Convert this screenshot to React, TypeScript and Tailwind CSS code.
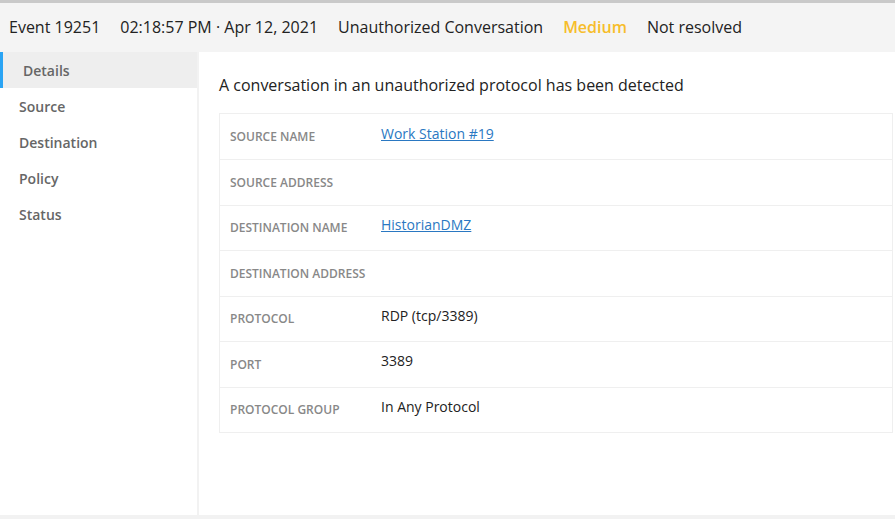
import React from 'react';

type Row = { label: string; value?: string; link?: boolean };

const ROWS: Row[] = [
  { label: 'Source Name', value: 'Work Station #19', link: true },
  { label: 'Source Address' },
  { label: 'Destination Name', value: 'HistorianDMZ', link: true },
  { label: 'Destination Address' },
  { label: 'Protocol', value: 'RDP (tcp/3389)' },
  { label: 'Port', value: '3389' },
  { label: 'Protocol Group', value: 'In Any Protocol' },
];

const NAV = ['Details', 'Source', 'Destination', 'Policy', 'Status'];

export default function App() {
  return (
    <div className="h-[519px] w-[895px] overflow-hidden bg-[#f2f2f2] flex flex-col font-['Open_Sans',sans-serif]">
      <div className="h-[3px] bg-[#c9c9c9]" />
      {/* header */}
      <header className="h-[49px] bg-[#f4f4f4] flex items-center gap-5 pl-[9px] pb-[2px] text-[16px] text-[#222]">
        <span>Event 19251</span>
        <span>02:18:57 PM · Apr 12, 2021</span>
        <span>Unauthorized Conversation</span>
        <span className="text-[#f7bd2a] font-semibold">Medium</span>
        <span>Not resolved</span>
      </header>

      <div className="flex flex-1 min-h-0 gap-[2px] pb-[4px]">
        <nav className="w-[197px] bg-white flex flex-col">
          {NAV.map((n, i) => (
            <div
              key={n}
              className={
                i === 0
                  ? 'h-[36px] flex items-center pl-[20px] border-l-[3px] border-[#2aa4f4] bg-[#eeeeee] text-[14px] font-semibold text-[#666]'
                  : 'h-[36px] flex items-center pl-[19px] text-[14px] font-semibold text-[#666]'
              }
            >
              {n}
            </div>
          ))}
        </nav>

        <main className="flex-1 bg-white pl-[20px] pr-[2px] pt-[22px]">
          <h1 className="text-[16px] text-[#222] leading-[22px]">
            A conversation in an unauthorized protocol has been detected
          </h1>
          <div className="mt-[17px] border border-[#efefef]">
            {ROWS.map((r, i) => (
              <div
                key={r.label}
                className={
                  i === 0
                    ? 'h-[45px] flex items-center'
                    : 'h-[45.5px] flex items-center border-t border-[#efefef]'
                }
              >
                <div className="w-[161px] pl-[10px] pt-[1px] text-[12px] font-semibold uppercase text-[#888]">
                  {r.label}
                </div>
                {r.value && (
                  <div
                    className={
                      r.link
                        ? 'text-[14px] text-[#2a78c2] underline -mt-[7px]'
                        : 'text-[14px] text-[#222] -mt-[7px]'
                    }
                  >
                    {r.value}
                  </div>
                )}
              </div>
            ))}
          </div>
        </main>
      </div>
    </div>
  );
}
